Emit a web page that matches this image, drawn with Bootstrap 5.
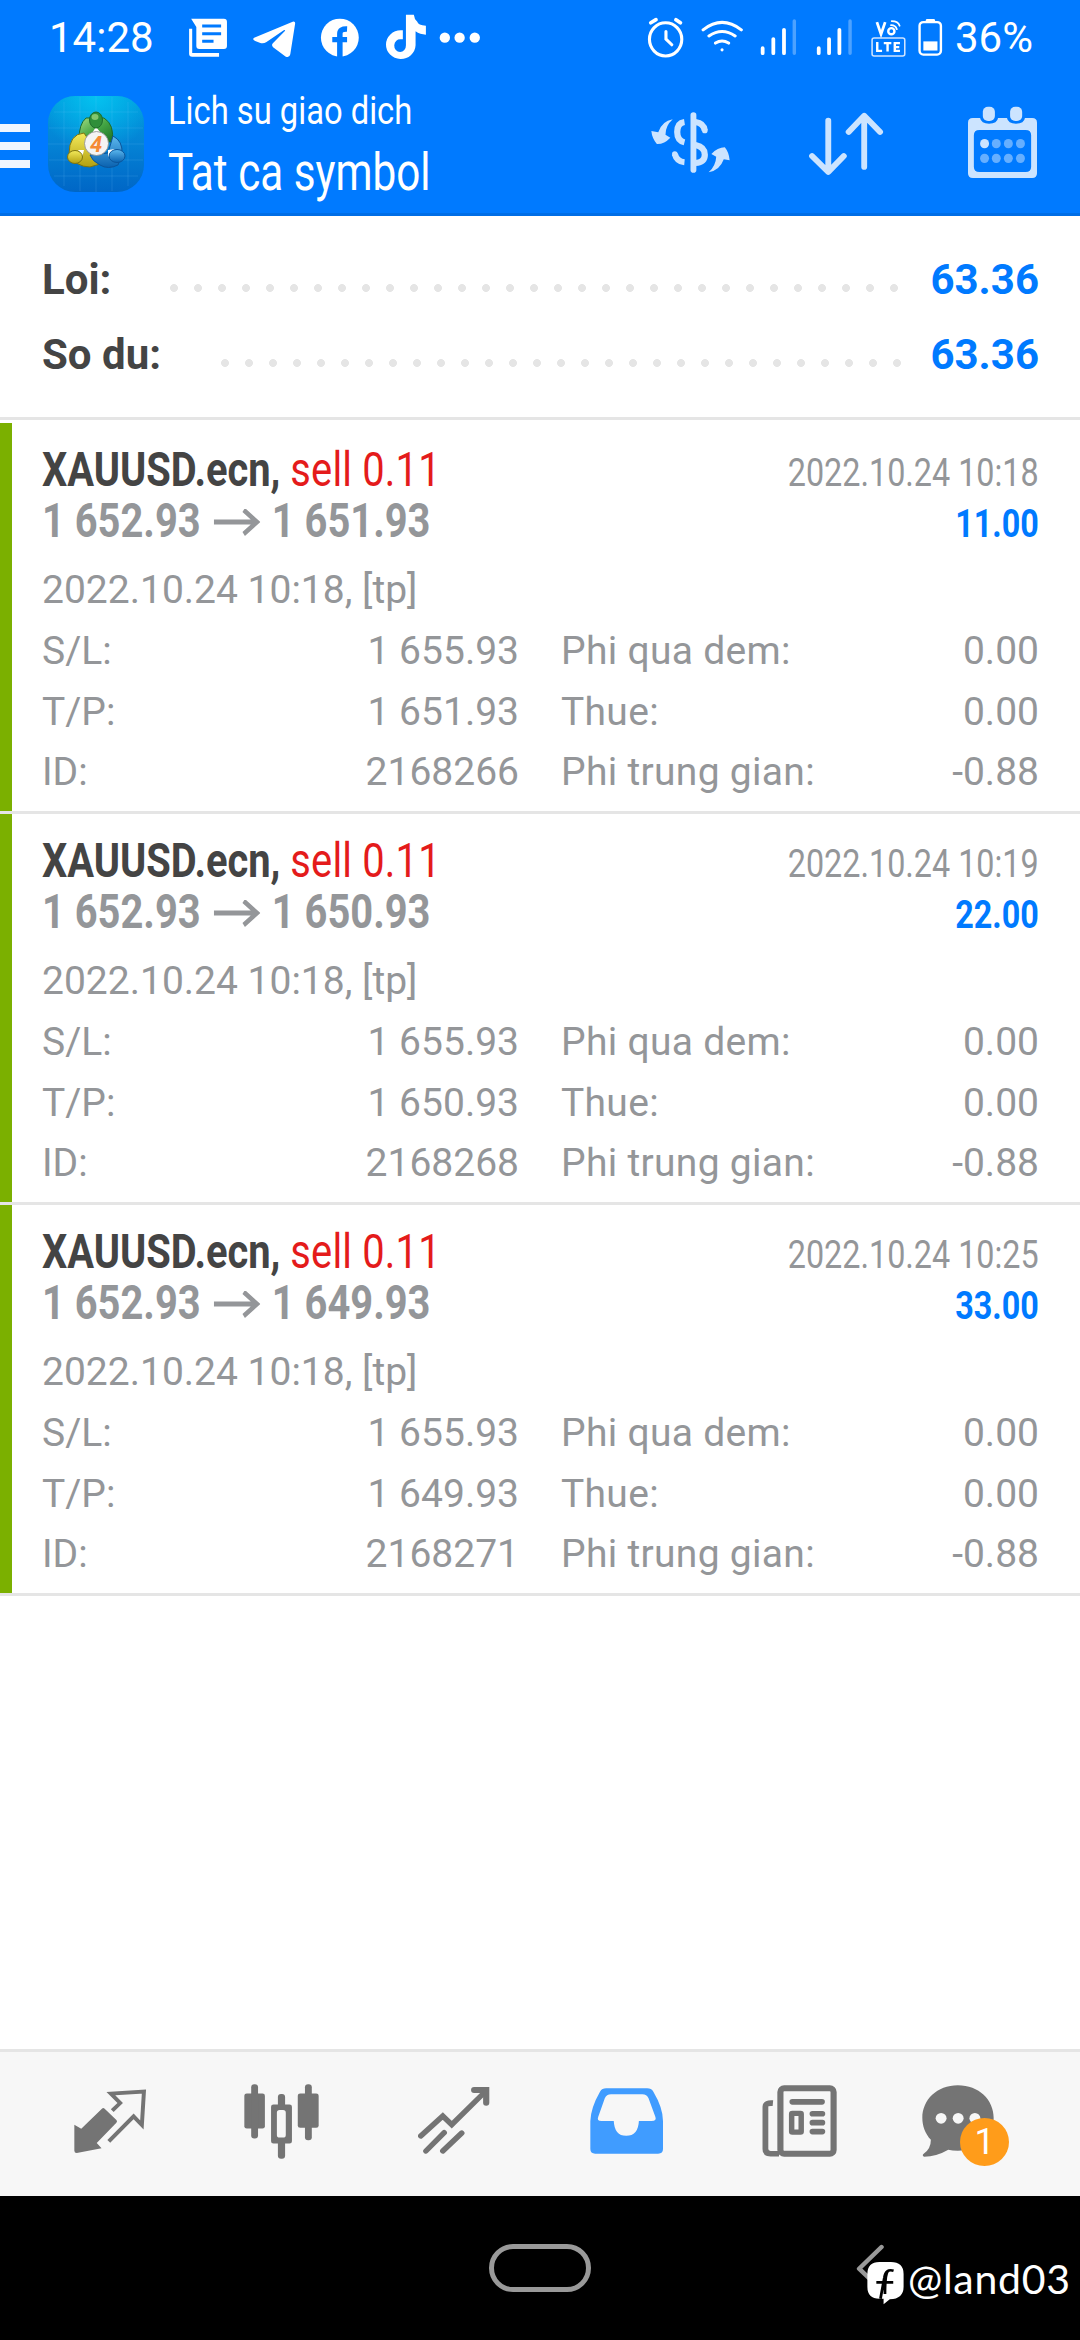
<!DOCTYPE html>
<html lang="vi">
<head>
<meta charset="utf-8">
<meta name="viewport" content="width=device-width, initial-scale=1">
<title>Lich su giao dich</title>
<link href="https://cdn.jsdelivr.net/npm/bootstrap@5.3.0/dist/css/bootstrap.min.css" rel="stylesheet">
<style>
body{font-family:Roboto,"Liberation Sans",sans-serif;width:1080px;height:2340px;overflow:hidden;font-size:39px;color:#949699;background:#fff}
svg{display:block;flex:none}
.blue{background:#007aff}
.statusline{height:75px;font-size:42px;padding:0 47px 0 49px}
.statusline .clock{width:137px}
.percent{margin-left:11px}
.appbar{height:141px;border-bottom:3px solid #006ee6;padding-right:43px}
.burger{width:30px;margin:49px 18px 0 0}
.burger i{height:8px;background:#f0f6ff}
.burger i+i{margin-top:10px}
.app-icon{margin-top:21px}
.narrow{display:inline-block;white-space:nowrap;transform-origin:0 50%}
.narrow.end{transform-origin:100% 50%}
.heading{padding-left:24px;padding-top:11px}
.h-top{font-size:39.5px;line-height:50px;transform:scaleX(.828)}
.h-main{font-size:51px;line-height:73px;transform:scaleX(.828)}
.tools{margin-top:31px;width:386px;flex:none}
.summary{padding:26px 41px 25px 42px;border-bottom:3px solid #e5e5e5;margin-bottom:3px;font-size:42px;line-height:75px;font-weight:700}
.summary .name{color:#444}
.val{color:#007aff}
.leader{height:8px;margin:16px 31px 0 auto;width:729px;background:radial-gradient(circle at 4px 4px,#e5e5e5 3.6px,transparent 4.3px) 0 0/24px 8px repeat-x}
.leader.short{width:681px;margin-right:28px}
.deal{height:391px;border-bottom:3px solid #e5e5e5}
.stripe{width:12px;background:#7bb000}
.deal-body{padding:21px 41px 0 30px}
.line1{height:51px;line-height:51px}
.t-name{font-size:48px;transform:scaleX(.83)}
.t-name b{color:#444}
.to{margin:0 2px 0 4px}
.sell{color:#e41b1b;letter-spacing:.25px}
.t-date{font-size:39px;transform:scaleX(.829)}
.t-note{line-height:61px;margin-top:14px}
.pairs{line-height:60.6px;gap:42px}
.pairs .left{width:477px}
.fees span:first-child{letter-spacing:.3px}
.tabs{height:147px;border-top:3px solid #e5e5e5;background:#f7f7f7;color:#747474}
.sysnav{height:144px;background:#000}
.badge-dot{left:38px;top:33px;width:49px;height:48px;background:#ff9c1a;color:#fff;font-size:36px;line-height:48px}
.pill{width:102px;height:48px;border:5px solid #999;border-radius:24px;left:489px;top:48px}
.mark-by{left:856px;top:48px}
.mark-by span{font-family:Lato,sans-serif;font-size:41px;line-height:50px;color:#fff;letter-spacing:.7px;padding:10px 0 0 2px}
</style>
</head>
<body class="d-flex flex-column">
<header class="blue text-white">
  <div class="statusline d-flex align-items-center">
    <span class="clock">14:28</span>
    <svg width="296" height="50" viewBox="540 34 860 150" preserveAspectRatio="none" fill="#fff">
      <path d="M555 51H650q9 0 9 9V133q0 9-9 9H579q-9 0-9-9V76z"/><path d="M587 73H642M587 96H642M587 119H620" stroke="#007aff" stroke-width="9" fill="none"/><path d="M549 81h9v73H636v11H558q-9 0-9-9z"/>
      <path d="M738 108L850 60q8-2 7 6L843 158q-2 11-13 7L793 137Q787 130 793 124L828 87Q828 83 824 86L774 121Q765 127 756 124L741 118Q731 113 738 108z"/>
      <ellipse cx="987" cy="108" rx="55" ry="57"/><path d="M987 166V122M965 114H1008M987 120V96Q987 81 1008 82" stroke="#007aff" stroke-width="16" fill="none"/>
      <path d="M1179 39h23q1 13 10 21 2 10 25 12v27q-17 0-30-10V131a43 43 0 1 1-43-45h6v27h-6a17 19 0 1 0 15 18z"/>
      <ellipse cx="1292" cy="108" rx="15" ry="15.500"/><ellipse cx="1335" cy="108" rx="15" ry="15.500"/><ellipse cx="1379" cy="108" rx="15" ry="15.500"/>
    </svg>
    <svg class="ms-auto" width="298" height="42" viewBox="303 48 866 124" preserveAspectRatio="none" fill="none" stroke="#fff" stroke-linecap="round">
      <ellipse cx="360" cy="114" rx="47" ry="49" stroke-width="9"/><path d="M317 65L332 56M403 65L390 56" stroke-width="11"/><path d="M361 91V113L378 130" stroke-width="9"/>
      <path d="M469 86Q524 42 580 86M486 104Q524 78 562 104M505 125Q524 113 543 125" stroke-width="9"/><circle cx="524" cy="145" r="4.500" fill="#fff" stroke="none"/>
      <path d="M642 140V155M673 113V155M704 86V155M805 140V155M835 113V155M865 86V155" stroke-width="11"/><path d="M734 60V155M896 60V155" stroke-width="10" stroke="#4da2ff"/>
      <path d="M974 63L986 99L998 63" stroke-width="8" stroke-linecap="butt"/><ellipse cx="1016" cy="90" rx="9" ry="9" stroke-width="7"/><path d="M1015 72Q1028 72 1032 84M1017 60Q1036 60 1040 74" stroke-width="5"/>
      <rect x="960" y="110" width="95" height="53" rx="6" stroke-width="4.500" stroke="#cfe4ff"/>
      <path d="M975 122V148H989M994 125H1016M1005 125V150M1041 125H1026V148H1041M1026 137H1039" stroke-width="7" stroke-linecap="butt"/>
      <rect x="1098" y="63" width="62" height="96" rx="11" stroke-width="7"/><path d="M1120 58H1139" stroke-width="8"/><path d="M1109 120H1150V147H1109z" fill="#fff" stroke="none"/>
    </svg>
    <span class="percent">36%</span>
  </div>
  <div class="appbar d-flex align-items-start">
    <div class="burger d-flex flex-column"><i></i><i></i><i></i></div>
    <svg class="app-icon" width="96" height="96" viewBox="0 0 96 96">
      <defs>
        <linearGradient id="tile" x1="0" y1="0" x2="0" y2="1"><stop offset="0" stop-color="#009bdc"/><stop offset=".5" stop-color="#0483d5"/><stop offset="1" stop-color="#0066c6"/></linearGradient>
        <radialGradient id="glow" cx=".5" cy="0" r=".6"><stop offset="0" stop-color="#04c2f0"/><stop offset="1" stop-color="#04c2f0" stop-opacity="0"/></radialGradient>
        <linearGradient id="gr" x1="0" y1="0" x2="1" y2="1"><stop offset="0" stop-color="#a5dd83"/><stop offset=".5" stop-color="#44a544"/><stop offset="1" stop-color="#1b6f25"/></linearGradient>
        <linearGradient id="ye" x1="0" y1="0" x2="0" y2="1"><stop offset="0" stop-color="#f3ea5b"/><stop offset="1" stop-color="#b3a010"/></linearGradient>
        <linearGradient id="bl" x1="0" y1="0" x2="0" y2="1"><stop offset="0" stop-color="#5cb8ee"/><stop offset="1" stop-color="#0a62b0"/></linearGradient>
      </defs>
      <rect width="96" height="96" rx="27" fill="url(#tile)"/><rect width="96" height="96" rx="27" fill="url(#glow)"/>
      <path d="M16 6V90M32 1V95M48 0V96M64 1V95M80 6V90M6 16H90M1 32H95M0 48H96M1 64H95M6 80H90" stroke="#7fd0ff" stroke-opacity=".16"/>
      <path d="M38 22Q31 28 31 43L64 46Q67 29 56 22z" fill="url(#gr)" stroke="#1d6b2c"/>
      <path d="M36 37Q21 38 21 58Q28 71 42 71L52 68L42 46z" fill="url(#ye)" stroke="#7d7410"/>
      <path d="M65 40Q75 45 74 58L70 69Q60 74 52 69Q44 65 42 59L60 57z" fill="url(#bl)" stroke="#0b559b"/>
      <path d="M36 54L30 54 34 62zM60 54L67 53 60 61zM44 37L48 31 53 37z" fill="#fff"/>
      <ellipse cx="48" cy="24" rx="6.500" ry="8" fill="#2f8f3a" stroke="#1d6b2c"/><ellipse cx="47" cy="21" rx="3.500" ry="3" fill="#a5dd83" fill-opacity=".7"/>
      <ellipse cx="27" cy="61" rx="7.500" ry="6.500" fill="url(#ye)" stroke="#7d7410"/>
      <ellipse cx="69" cy="60" rx="8" ry="6.500" fill="url(#bl)" stroke="#0b559b"/>
      <circle cx="48.500" cy="47.500" r="12" fill="#f4f4f4" stroke="#8a8a8a" stroke-width=".8"/>
      <text x="48" y="55.500" text-anchor="middle" font-family="Roboto" font-style="italic" font-weight="700" font-size="22" fill="#f58a35">4</text>
    </svg>
    <div class="heading d-flex flex-column align-items-start">
      <span class="narrow h-top">Lich su giao dich</span>
      <span class="narrow h-main">Tat ca symbol</span>
    </div>
    <div class="tools d-flex ms-auto justify-content-between">
      <svg width="79" height="73" viewBox="321 317 229 219" preserveAspectRatio="none" fill="none" stroke="#cce4ff">
        <path d="M444 344V509" stroke-width="17" stroke-linecap="round"/>
        <path d="M418 365Q397 368 397 395Q397 421 418 426M418 486Q396 484 390 461" stroke-width="18"/>
        <path d="M450 365Q474 368 477 391M450 434Q477 440 477 463Q477 486 450 488" stroke-width="18"/>
        <circle cx="390" cy="461" r="8" fill="#cce4ff" stroke="none"/><circle cx="477" cy="391" r="8" fill="#cce4ff" stroke="none"/>
        <path d="M384 357Q353 362 342 396L322 392Q324 414 338 431Q359 432 377 412L363 403Q363 376 384 357zM488 516Q520 511 532 477L549 480Q547 456 535 441Q514 441 496 461L510 469Q509 496 488 516z" fill="#cce4ff" stroke="none"/>
      </svg>
      <svg width="76" height="73" viewBox="787 317 220 219" preserveAspectRatio="none" fill="none" stroke="#cce4ff" stroke-width="17" stroke-linecap="round" stroke-linejoin="round" overflow="visible"><path d="M837 361V511M790 467L837 515L882 467M941 500V348M896 395L941 346L987 395"/></svg>
      <svg width="69" height="73" viewBox="1243 318 200 219" preserveAspectRatio="none" fill="#cce4ff">
        <path fill-rule="evenodd" d="M1257 354H1278Q1281 371 1304 371Q1328 371 1330 354H1356Q1359 371 1382 371Q1406 371 1408 354H1429q14 0 14 14V520q0 14-14 14H1257q-14 0-14-14V368q0-14 14-14zM1276 390q-16 0-16 16V500q0 16 16 16H1410q16 0 16-16V406q0-16-16-16z"/>
        <rect x="1286" y="320" width="35" height="43" rx="15"/><rect x="1365" y="320" width="35" height="43" rx="15"/>
        <ellipse cx="1291" cy="431" rx="13" ry="14"/>
        <g fill="#66afff"><ellipse cx="1325" cy="431" rx="13" ry="14"/><ellipse cx="1360" cy="431" rx="13" ry="14"/><ellipse cx="1395" cy="431" rx="13" ry="14"/><ellipse cx="1291" cy="475" rx="13" ry="14"/><ellipse cx="1325" cy="475" rx="13" ry="14"/><ellipse cx="1360" cy="475" rx="13" ry="14"/><ellipse cx="1395" cy="475" rx="13" ry="14"/></g>
      </svg>
    </div>
  </div>
</header>
<section class="summary">
  <div class="d-flex align-items-center"><span class="name">Loi:</span><span class="leader"></span><span class="val">63.36</span></div>
  <div class="d-flex align-items-center"><span class="name">So du:</span><span class="leader short"></span><span class="val">63.36</span></div>
</section>
<main class="flex-grow-1" id="deals"></main>
<nav class="tabs position-relative d-flex align-items-start">
  <svg width="72" height="65" viewBox="215 150 209 195" preserveAspectRatio="none" style="margin:37px 0 0 74px"><path d="M216 257L236 269L296 209q4-4 8 0L338 243q4 4 0 8L281 312L295 328L223 342q-7 0-7-7z" fill="#747474"/><path d="M326 215L349 192L322 164L418 158L412 258L388 232L316 307" fill="none" stroke="#747474" stroke-width="11.500"/></svg>
  <svg width="75" height="75" viewBox="708 134 219 224" preserveAspectRatio="none" fill="#747474" style="margin:32px 0 0 98px"><rect x="709" y="162" width="60" height="105" rx="7"/><rect x="865" y="162" width="61" height="103" rx="7"/><rect x="729" y="135" width="20" height="162" rx="9"/><rect x="886" y="135" width="20" height="167" rx="9"/><rect x="807" y="164" width="21" height="40" rx="9"/><rect x="807" y="300" width="21" height="57" rx="9"/><path fill-rule="evenodd" d="M794 195H841q7 0 7 7V305q0 7-7 7H794q-7 0-7-7V202q0-7 7-7zM812 212q-8 0-8 8V286q0 8 8 8H822q8 0 8-8V220q0-8-8-8z"/></svg>
  <svg width="72" height="67" viewBox="1213 143 209 201" preserveAspectRatio="none" fill="none" stroke="#747474" stroke-width="16" stroke-linecap="round" style="margin:35px 0 0 99px"><path d="M1221 290L1285 230L1311 256L1410 155"/><path d="M1376 152H1411V190" stroke-width="18"/><path d="M1236 335L1289 280M1285 335L1340 281"/></svg>
  <svg width="73" height="66" viewBox="145 143 212 200" preserveAspectRatio="none" fill="#409cff" style="margin:36px 0 0 100px"><path fill-rule="evenodd" d="M192 144H311q12 0 18 10Q357 203 357 243V328q0 14-14 14H160q-14 0-14-14V243Q147 203 174 154q6-10 18-10zM206 162q-13 0-18 12L169 230Q164 243 178 243H214Q216 288 250 288Q285 288 287 243H324Q339 243 335 231L315 174q-5-12-18-12z"/></svg>
  <svg width="75" height="72" viewBox="645 134 220 218" preserveAspectRatio="none" fill="none" stroke="#747474" style="margin:33px 0 0 99px"><rect x="699" y="144" width="156" height="198" rx="11" stroke-width="18"/><path d="M677 189Q655 187 655 200V328Q655 342 670 342H695" stroke-width="17"/><path d="M734 185H821M793 221H822M793 248H822M793 275H822" stroke-width="17" stroke-linecap="round"/><rect x="732" y="220" width="28" height="57" rx="2" stroke-width="16"/></svg>
  <div class="position-relative" style="margin:33px 0 0 85px"><svg width="72" height="72" viewBox="1108 134 211 218" preserveAspectRatio="none" fill="#747474"><path d="M1213 135C1275 135 1318 179 1318 234S1275 333 1213 333Q1197 333 1185 330Q1150 351 1114 351Q1107 347 1113 342Q1134 328 1134 300C1117 281 1109 258 1109 234C1109 179 1152 135 1213 135z"/><g fill="#f7f7f7"><circle cx="1164" cy="235" r="16"/><circle cx="1214" cy="235" r="16"/><circle cx="1263" cy="235" r="16"/></g></svg><span class="badge-dot position-absolute rounded-circle text-center">1</span></div>
</nav>
<footer class="sysnav position-relative">
  <div class="pill position-absolute"></div>
  <div class="mark-by position-absolute d-flex">
    <svg width="50" height="62" viewBox="917 610 145 186" preserveAspectRatio="none"><path d="M991 619L926 684L991 748" fill="none" stroke="#999" stroke-width="13" stroke-linecap="round" stroke-linejoin="round"/><path d="M985 664H1018Q1055 664 1055 700V738Q1055 774 1015 776L997 791V774H985Q950 774 950 738V700Q950 664 985 664z" fill="#fff"/><path d="M1026 690Q1003 683 999 712L988 774M976 725H1025M1010 690Q1001 700 1001 760" stroke="#000" stroke-width="8" fill="none"/></svg>
    <span>@land03</span>
  </div>
</footer>
<script>
const deals=[["1 651.93","10:18","11.00","2168266"],["1 650.93","10:19","22.00","2168268"],["1 649.93","10:25","33.00","2168271"]];
const pair=(k,v)=>`<div class="d-flex justify-content-between"><span>${k}</span><span>${v}</span></div>`;
document.getElementById("deals").innerHTML=deals.map(([tp,time,profit,id])=>`
<article class="deal d-flex"><div class="stripe"></div><div class="deal-body flex-grow-1">
<div class="line1 d-flex justify-content-between align-items-baseline"><span class="narrow t-name"><b>XAUUSD.ecn,</b> <span class="sell">sell 0.11</span></span><span class="narrow end t-date">2022.10.24 ${time}</span></div>
<div class="line1 d-flex justify-content-between align-items-baseline"><b class="narrow t-name price">1 652.93 <svg class="to d-inline-block" width="56" height="30" viewBox="0 0 56 30" fill="none" stroke="#949699" stroke-width="5"><path d="M0 13H52M36 1L52 13L36 25"/></svg> ${tp}</b><b class="narrow end t-date val">${profit}</b></div>
<div class="t-note">2022.10.24 10:18, [tp]</div>
<div class="pairs d-flex"><div class="left">${pair("S/L:","1 655.93")}${pair("T/P:",tp)}${pair("ID:",id)}</div>
<div class="fees flex-grow-1">${pair("Phi qua dem:","0.00")}${pair("Thue:","0.00")}${pair("Phi trung gian:","-0.88")}</div></div>
</div></article>`).join("");
</script>
<script src="https://cdn.jsdelivr.net/npm/bootstrap@5.3.0/dist/js/bootstrap.bundle.min.js"></script>
</body>
</html>
